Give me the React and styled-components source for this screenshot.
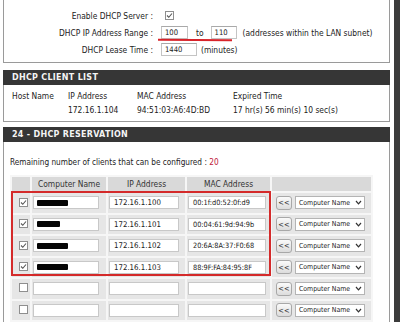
import React from 'react'
import styled, { createGlobalStyle } from 'styled-components'

const GlobalStyle = createGlobalStyle`
  html, body {
    margin: 0;
    padding: 0;
    background: #ffffff;
  }
  body {
    font-family: "DejaVu Sans Condensed", "DejaVu Sans", "Liberation Sans", sans-serif;
    font-size: 8.4px;
    color: #222;
  }
`

const reservations = [
  { checked: true, name: 31, ip: '172.16.1.100', mac: '00:1f:d0:52:0f:d9' },
  { checked: true, name: 23, ip: '172.16.1.101', mac: '00:04:61:9d:94:9b' },
  { checked: true, name: 31, ip: '172.16.1.102', mac: '20:6A:8A:37:F0:68' },
  { checked: true, name: 31, ip: '172.16.1.103', mac: '88:9F:FA:84:95:8F' },
  { checked: false, name: 0, ip: '', mac: '' },
  { checked: false, name: 0, ip: '', mac: '' },
]

const Check = ({ checked }) => (
  <CheckBox>
    {checked && (
      <svg width="7" height="7" viewBox="0 0 7 7">
        <path d="M1 3.5 L2.8 5.3 L6 1.5" fill="none" stroke="#555" strokeWidth="1.1" />
      </svg>
    )}
  </CheckBox>
)

const App = () => {
  return (
    <>
      <GlobalStyle />
      <Page>
        <Main>
          <SettingsBox>
            <FormRow>
              <Label>Enable DHCP Server :</Label>
              <Controls>
                <Check checked />
              </Controls>
            </FormRow>
            <FormRow>
              <Label>DHCP IP Address Range :</Label>
              <Controls>
                <TextBox $w={27}>100</TextBox>
                <span style={{ margin: '0 7px 0 8px' }}>to</span>
                <TextBox $w={26}>110</TextBox>
                <Note>(addresses within the LAN subnet)</Note>
                <RedMark />
              </Controls>
            </FormRow>
            <FormRow>
              <Label>DHCP Lease Time :</Label>
              <Controls>
                <TextBox $w={36}>1440</TextBox>
                <Note $gap={4}>(minutes)</Note>
              </Controls>
            </FormRow>
          </SettingsBox>

          <SectionHeader>DHCP CLIENT LIST</SectionHeader>
          <ClientBox>
            <ClientRow>
              <span>Host Name</span>
              <span>IP Address</span>
              <span>MAC Address</span>
              <span>Expired Time</span>
            </ClientRow>
            <ClientRow>
              <span></span>
              <span>172.16.1.104</span>
              <span>94:51:03:A6:4D:BD</span>
              <span>17 hr(s) 56 min(s) 10 sec(s)</span>
            </ClientRow>
          </ClientBox>

          <SectionHeader $top={5}>24 - DHCP RESERVATION</SectionHeader>
          <ReservationBox>
            <Remaining>
              Remaining number of clients that can be configured : <Count>20</Count>
            </Remaining>
            <TableWrap>
              <Table>
                <colgroup>
                  <col style={{ width: 18 }} />
                  <col style={{ width: 74 }} />
                  <col style={{ width: 77 }} />
                  <col style={{ width: 83 }} />
                  <col style={{ width: 99 }} />
                </colgroup>
                <thead>
                  <tr>
                    <Th></Th>
                    <Th>Computer Name</Th>
                    <Th>IP Address</Th>
                    <Th>MAC Address</Th>
                    <Th></Th>
                  </tr>
                </thead>
                <tbody>
                  {reservations.map((r, i) => (
                    <tr key={i}>
                      <Td $center>
                        <Check checked={r.checked} />
                      </Td>
                      <Td>
                        <CellInput $w={66}>
                          {r.name > 0 && <Redacted style={{ width: r.name }} />}
                        </CellInput>
                      </Td>
                      <Td>
                        <CellInput $w={70}>{r.ip}</CellInput>
                      </Td>
                      <Td>
                        <CellInput $w={78} $small>{r.mac}</CellInput>
                      </Td>
                      <Td>
                        <ActionCell>
                          <CopyButton>&lt;&lt;</CopyButton>
                          <Select>
                            <span>Computer Name</span>
                            <svg width="7" height="5" viewBox="0 0 7 5">
                              <path d="M1 1 L3.5 3.8 L6 1" fill="none" stroke="#333" strokeWidth="1.2" />
                            </svg>
                          </Select>
                        </ActionCell>
                      </Td>
                    </tr>
                  ))}
                </tbody>
              </Table>
              <RedFrame />
            </TableWrap>
          </ReservationBox>
        </Main>
        <SideBar />
      </Page>
    </>
  )
}

const Page = styled.div`
  display: flex;
  height: 322px;
  overflow: hidden;
`

const Main = styled.div`
  width: 387px;
  margin-left: 3px;
  display: flex;
  flex-direction: column;
`

const SideBar = styled.div`
  width: 6px;
  margin-left: 4px;
  background: #3c3c3c;
`

const Box = styled.div`
  background: #fff;
  border: 1px solid #9a9a9a;
`

const SettingsBox = styled(Box)`
  border-top: none;
  padding: 7px 0 4px;
`

const FormRow = styled.div`
  display: grid;
  grid-template-columns: 149px 1fr;
  column-gap: 7px;
  height: 17px;
  align-items: center;
`

const Label = styled.div`
  text-align: right;
  white-space: nowrap;
`

const Controls = styled.div`
  position: relative;
  display: flex;
  align-items: center;
  padding-left: 1px;
  white-space: nowrap;
`

const CheckBox = styled.span`
  display: inline-flex;
  align-items: center;
  justify-content: center;
  box-sizing: border-box;
  width: 9px;
  height: 9px;
  margin-left: 4px;
  border: 1px solid #8e8e8e;
  background: #fff;
`

const TextBox = styled.span`
  box-sizing: border-box;
  display: inline-flex;
  align-items: center;
  width: ${p => p.$w}px;
  height: 13px;
  padding-left: 3px;
  border: 1px solid #c4c4c4;
  border-top-color: #a9a9a9;
  background: #fff;
  font-size: 7.6px;
`

const Note = styled.span`
  margin-left: ${p => p.$gap || 6}px;
`

const RedMark = styled.span`
  position: absolute;
  left: -2px;
  top: 13px;
  width: 74px;
  height: 2px;
  background: #d8232a;
  transform: rotate(0.4deg);
`

const SectionHeader = styled.div`
  margin-top: ${p => p.$top || 7}px;
  height: 15px;
  line-height: 15px;
  padding-left: 9px;
  background: #363636;
  color: #f4f4f4;
  font-weight: bold;
  font-size: 8.9px;
  letter-spacing: 0.3px;
`

const ClientBox = styled(Box)`
  border-top: none;
  padding: 4px 0 4px 8px;
`

const ClientRow = styled.div`
  display: grid;
  grid-template-columns: 56px 69px 96px 1fr;
  height: 14px;
  align-items: center;
  white-space: nowrap;
`

const ReservationBox = styled(Box)`
  border-top: none;
  border-bottom: none;
  flex: 1;
  padding: 14px 0 0 6px;
`

const Remaining = styled.div`
  height: 12px;
  line-height: 12px;
  white-space: nowrap;
  font-size: 8.2px;
`

const Count = styled.span`
  color: #c0203a;
`

const TableWrap = styled.div`
  position: relative;
  margin-top: 7px;
  width: 363px;
`

const Table = styled.table`
  border-collapse: separate;
  border-spacing: 2px;
  table-layout: fixed;
  width: 363px;
  background: #f6f6f6;
`

const Th = styled.th`
  height: 14px;
  padding: 0;
  background: #d9d9d9;
  font-weight: normal;
  color: #333;
  text-align: center;
  white-space: nowrap;
`

const Td = styled.td`
  height: 19.5px;
  padding: 0;
  background: #e6e6e6;
  text-align: ${p => (p.$center ? 'center' : 'left')};
  vertical-align: middle;
`

const CellInput = styled.div`
  position: relative;
  box-sizing: border-box;
  display: flex;
  align-items: center;
  width: ${p => p.$w}px;
  height: 13px;
  margin-left: 1px;
  padding-left: 4px;
  border: 1px solid #c8c8c8;
  background: #fff;
  font-size: ${p => (p.$small ? 7.3 : 7.8)}px;
  white-space: nowrap;
  overflow: hidden;
`

const Redacted = styled.span`
  display: block;
  height: 6px;
  margin-left: -1px;
  background: #050505;
  border-radius: 1px;
`

const ActionCell = styled.div`
  display: flex;
  align-items: center;
  gap: 3px;
  padding-left: 4px;
`

const CopyButton = styled.span`
  box-sizing: border-box;
  display: inline-flex;
  align-items: center;
  justify-content: center;
  width: 16px;
  height: 14px;
  border: 1px solid #a8a8a8;
  border-radius: 3px;
  background: linear-gradient(#fafafa, #dcdcdc);
  font-size: 7.5px;
  color: #333;
`

const Select = styled.span`
  box-sizing: border-box;
  display: inline-flex;
  align-items: center;
  justify-content: space-between;
  width: 70px;
  height: 13px;
  padding: 0 2px 0 3px;
  border: 1px solid #b4b4b4;
  background: #fff;
  font-size: 6.9px;
  white-space: nowrap;
`

const RedFrame = styled.span`
  position: absolute;
  left: 1px;
  top: 16px;
  width: 260px;
  height: 85px;
  box-sizing: border-box;
  border: 2px solid #d42a2a;
  pointer-events: none;
`

export default App
